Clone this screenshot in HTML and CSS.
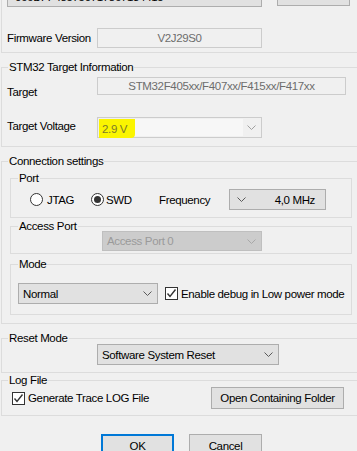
FILE: index.html
```html
<!DOCTYPE html>
<html>
<head>
<meta charset="utf-8">
<link rel="stylesheet" href="styles.css">
</head>
<body>
<div class="page">
  <div class="g-top">
    <div class="r1">
      <div class="combo c-serial"><span class="val">066DFF485750717867134415</span><svg class="arr" width="9" height="5" viewBox="0 0 9 5"><polyline points="0.5,0.5 4.5,4.5 8.5,0.5"/></svg></div>
      <div class="btn b-refresh">Refresh</div>
    </div>
    <div class="r2">
      <span class="lbl">Firmware Version</span>
      <div class="field f-fw">V2J29S0</div>
    </div>
  </div>

  <fieldset class="grp g-stm">
    <legend>STM32 Target Information</legend>
    <div class="in in-stm">
      <div class="r-target">
        <span class="lbl l-target">Target</span>
        <div class="field f-target">STM32F405xx/F407xx/F415xx/F417xx</div>
      </div>
      <div class="r-volt">
        <span class="lbl l-volt">Target Voltage</span>
        <div class="combo c-volt"><span class="edit"><span class="hl">2.9 V</span></span><svg class="arr" width="9" height="5" viewBox="0 0 9 5"><polyline points="0.5,0.5 4.5,4.5 8.5,0.5"/></svg></div>
      </div>
    </div>
  </fieldset>

  <fieldset class="grp g-conn">
    <legend>Connection settings</legend>
    <div class="in in-conn">
      <fieldset class="sub g-port">
        <legend>Port</legend>
        <div class="port-row">
          <div class="opt o-jtag"><span class="radio"></span><span>JTAG</span></div>
          <div class="opt o-swd"><span class="radio on"><span class="dot"></span></span><span>SWD</span></div>
          <span class="freq-lbl">Frequency</span>
          <div class="combo c-freq"><svg class="arr" width="9" height="5" viewBox="0 0 9 5"><polyline points="0.5,0.5 4.5,4.5 8.5,0.5"/></svg><span class="val">4,0 MHz</span></div>
        </div>
      </fieldset>
      <fieldset class="sub g-ap">
        <legend>Access Port</legend>
        <div class="ap-row">
          <div class="combo c-ap"><span class="val">Access Port 0</span><svg class="arr" width="9" height="5" viewBox="0 0 9 5"><polyline points="0.5,0.5 4.5,4.5 8.5,0.5"/></svg></div>
        </div>
      </fieldset>
      <fieldset class="sub g-mode">
        <legend>Mode</legend>
        <div class="mode-row">
          <div class="combo c-mode"><span class="val">Normal</span><svg class="arr" width="9" height="5" viewBox="0 0 9 5"><polyline points="0.5,0.5 4.5,4.5 8.5,0.5"/></svg></div>
          <div class="opt o-lp"><span class="check"><svg width="11" height="11" viewBox="0 0 11 11"><polyline points="1.5,5.5 4,8.5 9.5,1.5"/></svg></span><span>Enable debug in Low power mode</span></div>
        </div>
      </fieldset>
    </div>
  </fieldset>

  <fieldset class="grp g-reset">
    <legend>Reset Mode</legend>
    <div class="in in-reset">
      <div class="combo c-reset"><span class="val">Software System Reset</span><svg class="arr" width="9" height="5" viewBox="0 0 9 5"><polyline points="0.5,0.5 4.5,4.5 8.5,0.5"/></svg></div>
    </div>
  </fieldset>

  <fieldset class="grp g-log">
    <legend>Log File</legend>
    <div class="in in-log">
      <div class="opt o-log"><span class="check"><svg width="11" height="11" viewBox="0 0 11 11"><polyline points="1.5,5.5 4,8.5 9.5,1.5"/></svg></span><span>Generate Trace LOG File</span></div>
      <div class="btn b-folder">Open Containing Folder</div>
    </div>
  </fieldset>

  <div class="actions">
    <div class="btn b-ok">OK</div>
    <div class="btn b-cancel">Cancel</div>
  </div>
</div>
</body>
</html>
```

FILE: styles.css
```css
* { box-sizing: border-box; }
body {
  margin: 0;
  width: 357px;
  height: 451px;
  overflow: hidden;
  background: #f0f0f0;
  font-family: "Liberation Sans", Arial, sans-serif;
  font-size: 11.5px;
  letter-spacing: -0.35px;
  line-height: 14px;
  color: #000;
  white-space: nowrap;
}
.page { width: 380px; }

fieldset {
  margin: 0;
  padding: 0;
  border: 1px solid #dcdcdc;
  min-width: 0;
}
legend {
  padding: 0 1px;
  line-height: 14px;
  height: 14px;
}
.grp { margin-left: 1px; width: 379px; }
.grp > legend { margin-left: 6px; }
.sub > legend { margin-left: 7px; }

/* generic controls */
.combo {
  display: flex;
  align-items: center;
  justify-content: space-between;
  border: 1px solid #adadad;
  background: #e1e1e1;
  padding: 0 5px 0 4px;
  flex: none;
}
.arr { flex: none; }
.arr polyline { fill: none; stroke: #5a5a5a; stroke-width: 1; }
.btn {
  display: flex;
  align-items: center;
  justify-content: center;
  border: 1px solid #adadad;
  background: #e1e1e1;
  flex: none;
}
.field {
  display: flex;
  align-items: center;
  justify-content: center;
  border: 1px solid #cccccc;
  background: #f0f0f0;
  color: #6d6d6d;
  flex: none;
}
.lbl { width: 90px; flex: none; }
.opt { display: flex; align-items: center; gap: 3px; flex: none; }
.radio {
  width: 13px; height: 13px;
  border: 1px solid #333;
  border-radius: 50%;
  background: #fff;
  display: grid;
  place-items: center;
  flex: none;
}
.dot { width: 7px; height: 7px; border-radius: 50%; background: #333; }
.check {
  width: 13px; height: 13px;
  border: 1px solid #333;
  background: #fff;
  display: grid;
  place-items: center;
  flex: none;
}
.check polyline { fill: none; stroke: #333; stroke-width: 1.4; }

/* top group */
.g-top {
  margin-left: 1px;
  border-left: 1px solid #dcdcdc;
  border-bottom: 1px solid #dcdcdc;
  padding: 0 0 4px 5px;
}
.r1 { display: flex; margin-top: -14px; height: 21px; }
.c-serial { width: 255px; height: 21px; }
.c-serial .val { padding-left: 3px; }
.c-serial .arr polyline { stroke: #a0a0a0; }
.b-refresh { margin-left: 15px; width: 73px; height: 20px; }
.r2 { display: flex; align-items: center; margin-top: 21px; height: 20px; }
.f-fw { width: 165px; height: 20px; }

/* stm32 group */
.g-stm { margin-top: 7px; }
.in-stm { padding: 0 0 8px 5px; }
.r-target { display: flex; align-items: flex-start; margin-top: 3px; }
.l-target { margin-top: 8px; }
.f-target { width: 249px; height: 18px; }
.r-volt { display: flex; align-items: flex-start; margin-top: 18px; }
.l-volt { margin-top: 2px; }
.c-volt {
  width: 165px; height: 21px;
  border-color: #cccccc;
  background: #f0f0f0;
  padding: 0 5px 0 1px;
}
.c-volt .edit {
  align-self: stretch;
  width: 144px;
  margin: 1px 0;
  background: #f7f7f7;
  display: flex;
  align-items: center;
}
.c-volt .arr polyline { stroke: #a0a0a0; }
.hl {
  background: #fbf500;
  color: #7c7a2a;
  padding: 3px 8px 2px 3px;
  margin-top: 2px;
  border-radius: 0 0 4px 0;
}

/* connection settings */
.g-conn { margin-top: 7px; }
.in-conn { padding: 0 0 8px 8px; }
.sub { width: 342px; }
.g-port { margin-top: 3px; }
.port-row {
  display: flex;
  align-items: center;
  height: 21px;
  margin: 4px 0 7px;
  padding-left: 19px;
}
.o-jtag { width: 61px; gap: 4px; }
.o-swd { width: 68px; gap: 2px; }
.freq-lbl { width: 70px; flex: none; }
.c-freq { width: 97px; height: 21px; padding: 0 10px 0 7px; }

.g-ap { margin-top: 1px; }
.ap-row { margin-top: -2px; padding: 0 0 2px 91px; }
.c-ap {
  width: 160px; height: 20px;
  background: #cccccc;
  border-color: #bfbfbf;
  color: #9a9a9a;
}
.c-ap .arr polyline { stroke: #a8a8a8; }

.g-mode { margin-top: 3px; }
.mode-row {
  display: flex;
  align-items: center;
  height: 21px;
  margin: 12px 0 10px;
  padding-left: 7px;
}
.c-mode { width: 140px; height: 21px; }
.o-lp { margin-left: 7px; gap: 3px; }

/* reset */
.g-reset { margin-top: 7px; }
.in-reset { padding: 0 0 7px 95px; margin-top: -1px; }
.c-reset { width: 182px; height: 21px; }

/* log */
.g-log { margin-top: 0; }
.in-log {
  display: flex;
  align-items: center;
  height: 22px;
  padding-left: 10px;
  margin-bottom: 6px;
}
.o-log { width: 199px; gap: 3px; }
.b-folder { width: 133px; height: 22px; }

/* bottom buttons */
.actions {
  display: flex;
  gap: 15px;
  margin-top: 18px;
  padding-left: 101px;
}
.b-ok { width: 73px; height: 23px; border: 2px solid #0078d7; }
.b-cancel { width: 73px; height: 23px; }
```
